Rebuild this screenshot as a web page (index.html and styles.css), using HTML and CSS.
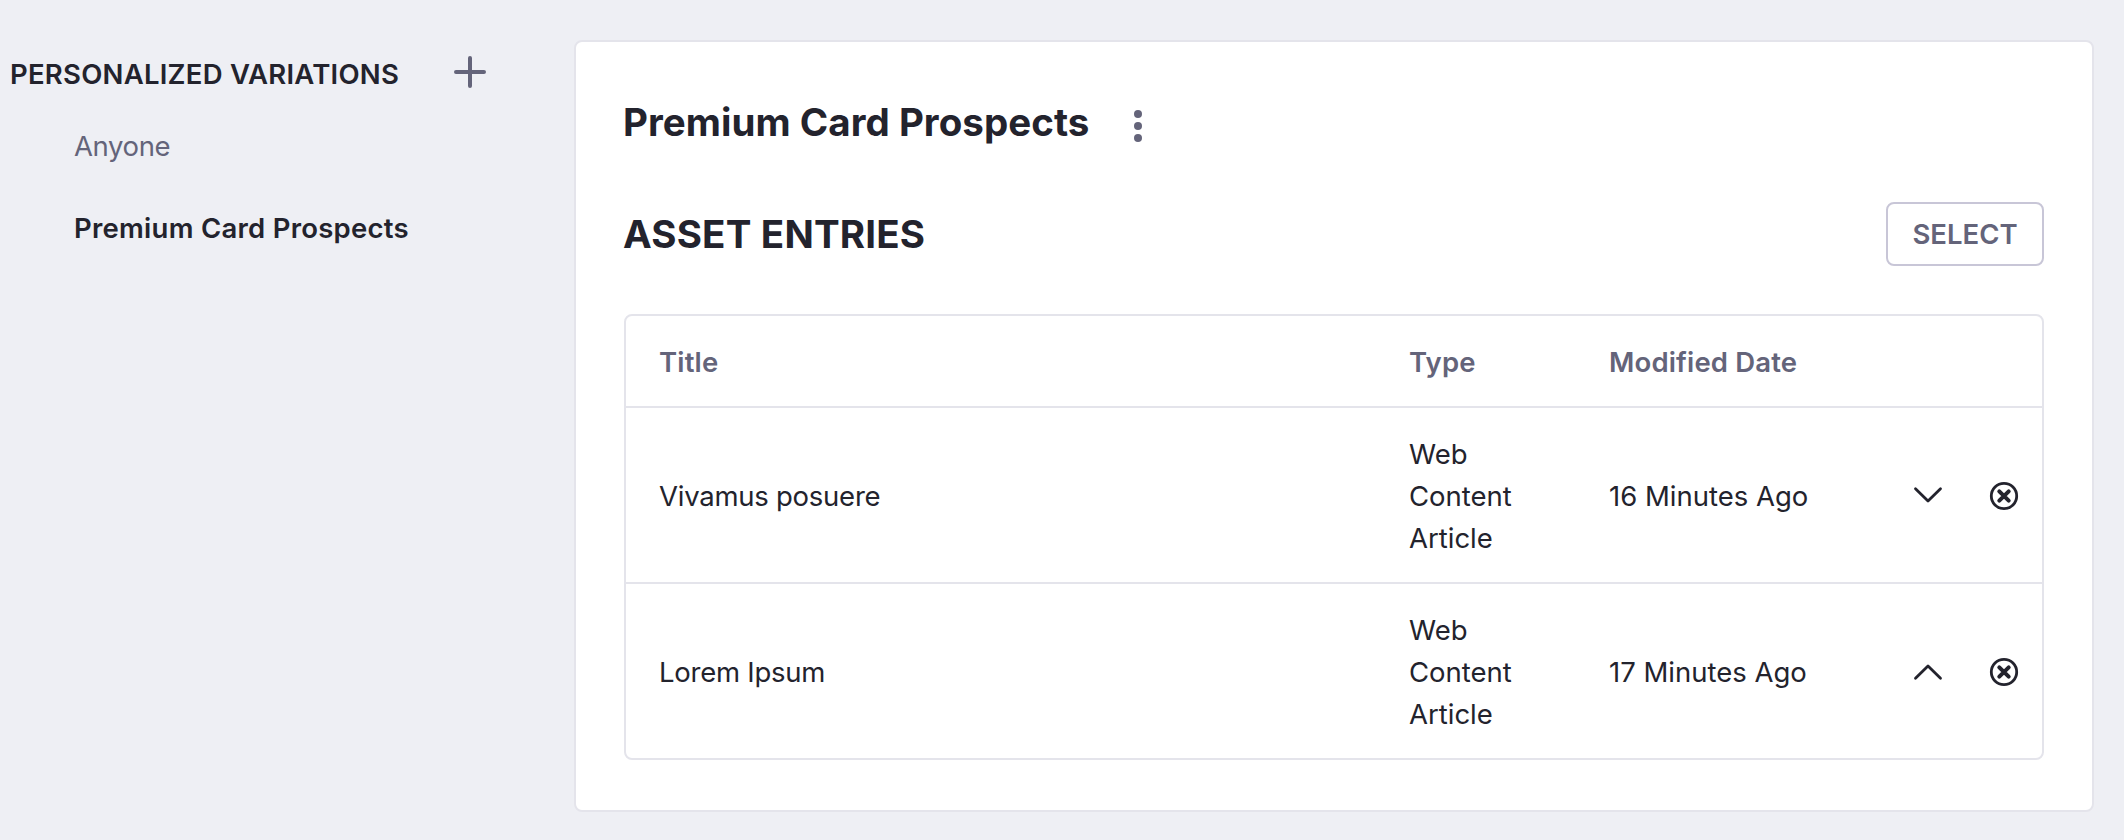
FILE: index.html
```html
<!DOCTYPE html>
<html lang="en">
<head>
<meta charset="utf-8">
<title>Personalized Variations</title>
<link rel="stylesheet" href="styles.css">
</head>
<body>
<div class="page">
  <aside class="sidebar">
    <div class="sidebar-header">
      <h2 class="sidebar-title">PERSONALIZED VARIATIONS</h2>
      <svg class="icon-plus" viewBox="0 0 32 32"><path d="M16 2v28M2 16h28"/></svg>
    </div>
    <nav class="variations">
      <a class="variation">Anyone</a>
      <a class="variation active">Premium Card Prospects</a>
    </nav>
  </aside>
  <main class="card">
    <header class="card-header">
      <h1 class="heading">Premium Card Prospects</h1>
      <svg class="icon-dots" viewBox="0 0 8 32"><circle cx="4" cy="4" r="4"/><circle cx="4" cy="16" r="4"/><circle cx="4" cy="28" r="4"/></svg>
    </header>
    <div class="section-header">
      <h2 class="heading section-title">ASSET ENTRIES</h2>
      <button class="select">SELECT</button>
    </div>
    <div class="table">
      <div class="row head">
        <div>Title</div>
        <div>Type</div>
        <div>Modified Date</div>
      </div>
      <div class="row">
        <div class="name">Vivamus posuere</div>
        <div class="type">Web Content Article</div>
        <div>16 Minutes Ago</div>
        <svg class="icon-row" viewBox="0 0 32 32"><path d="M3.500 8.700 16 21l12.500-12.300"/></svg>
        <svg class="icon-row" viewBox="0 0 32 32"><circle cx="16" cy="16" r="12.700"/><path class="cross" d="m11.300 11.300 9.400 9.400m0-9.400-9.400 9.400"/></svg>
      </div>
      <div class="row">
        <div class="name">Lorem Ipsum</div>
        <div class="type">Web Content Article</div>
        <div>17 Minutes Ago</div>
        <svg class="icon-row" viewBox="0 0 32 32"><path d="M3.500 22.300 16 10l12.500 12.300"/></svg>
        <svg class="icon-row" viewBox="0 0 32 32"><circle cx="16" cy="16" r="12.700"/><path class="cross" d="m11.300 11.300 9.400 9.400m0-9.400-9.400 9.400"/></svg>
      </div>
    </div>
  </main>
</div>
</body>
</html>
```
FILE: styles.css
```css
* { box-sizing: border-box; }
body {
  margin: 0;
  background: #eeeff4;
  color: #23232d;
  font-family: Inter, "Liberation Sans", sans-serif;
  font-size: 27.5px;
  line-height: 42px;
}
h1, h2 { margin: 0; }
.page { display: flex; height: 840px; padding: 40px 30px 28px 0; }
.sidebar { width: 574px; padding: 12px 0 0 10px; }
.sidebar-header { display: flex; justify-content: space-between; width: 476px; height: 42px; }
.sidebar-title { padding-top: 1px; font-size: 27.5px; font-weight: 560; letter-spacing: 0.24px; white-space: nowrap; }
.icon-plus { width: 32px; height: 32px; margin-top: 4px; fill: none; stroke: #64647a; stroke-width: 4; stroke-linecap: round; }
.variations { display: flex; flex-direction: column; gap: 40px; padding: 31px 0 0 64px; }
.variation { color: #64647a; letter-spacing: -0.4px; }
.variation.active { color: #23232d; font-weight: 600; letter-spacing: 0.26px; }
.card { flex: 1; height: 772px; padding: 48px; background: #fff; border: 2px solid #e4e4eb; border-radius: 8px; }
.card-header { display: flex; gap: 45px; height: 64px; align-items: center; }
.heading { margin-left: -1px; font-size: 38.5px; line-height: 64px; font-weight: 700; letter-spacing: 0.04px; white-space: nowrap; }
.section-title { letter-spacing: 0.18px; }
.icon-dots { width: 8px; height: 32px; margin-top: 8px; fill: #64647a; }
.section-header { display: flex; justify-content: space-between; align-items: center; height: 64px; margin-top: 48px; }
.select { width: 158px; height: 64px; padding: 0; background: #fff; border: 2px solid #c8c6d7; border-radius: 8px; color: #64647a; font: 600 27.5px/42px Inter, sans-serif; }
.table { margin-top: 48px; border: 2px solid #e4e4eb; border-radius: 8px; }
.row { display: grid; grid-template-columns: 750px 200px 303px 32px 32px; align-items: center; height: 176px; padding: 2px 0 0 33px; border-top: 2px solid #e4e4eb; }
.row.head { height: 90px; border-top: 0; color: #64647a; font-weight: 600; letter-spacing: 0.15px; }
.name { letter-spacing: -0.25px; }
.type { width: 110px; }
.icon-row { width: 32px; height: 32px; fill: none; stroke: #23232d; stroke-width: 2.8; stroke-linecap: round; stroke-linejoin: round; }
.icon-row:last-child { margin-left: 44px; }
.cross { stroke-width: 4; }
```
